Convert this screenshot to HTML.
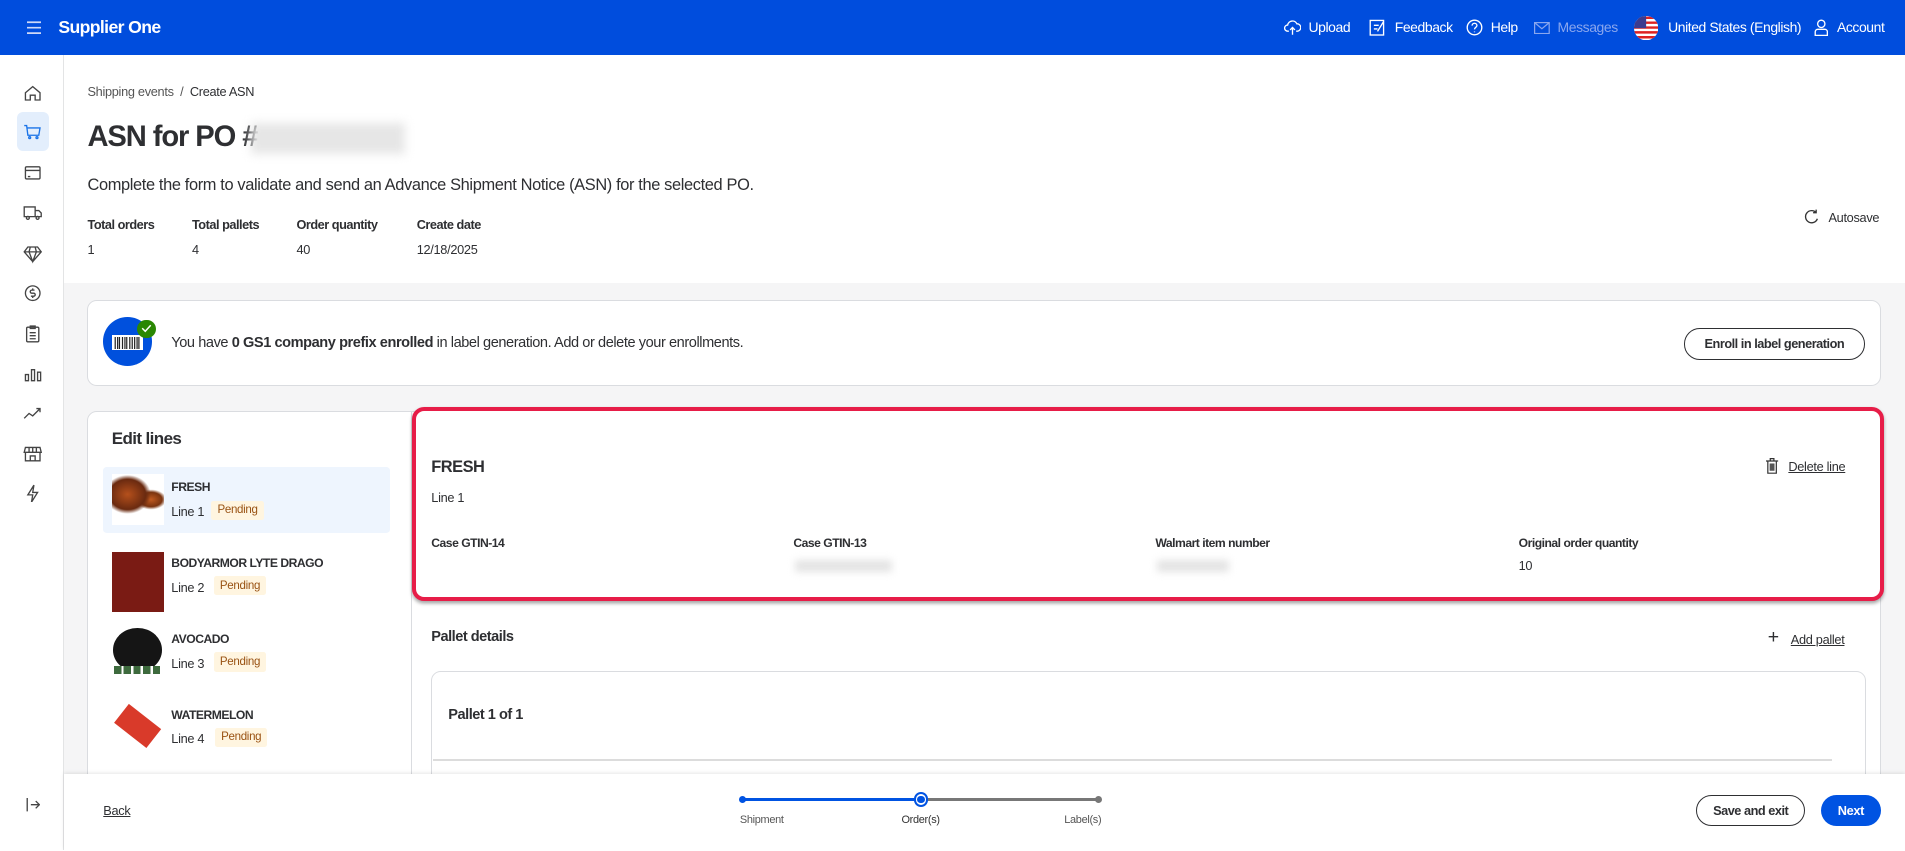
<!DOCTYPE html>
<html><head><meta charset="utf-8">
<style>
*{margin:0;padding:0;box-sizing:border-box}
html,body{width:1905px;height:851px;overflow:hidden;background:#fff}
#w{width:1568px;height:700px;position:relative;zoom:1.21492;font-family:"Liberation Sans",sans-serif;color:#2e2f32;overflow:hidden;letter-spacing:-.25px}
.a{position:absolute;white-space:nowrap}
.hdr{left:0;top:0;width:1568px;height:45px;background:#004ddd}
.nav{color:#fff;font-size:11.5px;top:16px;letter-spacing:-.35px}
.ico{position:absolute}
.side{left:0;top:45px;width:53px;height:655px;border-right:1px solid #e3e4e5;background:#fff}
.gray{left:53px;top:233px;width:1515px;height:467px;background:#f5f5f6}
.card{background:#fff;border:1px solid #dadce0;border-radius:8px}
.b{font-weight:bold}
.pend{background:#fff5e0;color:#995213;font-size:9.5px;padding:3px 5px;border-radius:2px}
.thumb{position:absolute;left:92px;width:43px;height:50px}
.blur{background:#e4e4e4;filter:blur(3px);height:10px}
</style></head><body><div id="w">
<div class="a hdr"></div>
<svg class="ico" style="left:22px;top:17px" width="12" height="11"><path d="M0 1h12M0 5.5h12M0 10h12" stroke="#cfd9f7" stroke-width="1.4"/></svg>
<div class="a b" style="left:48px;top:14px;color:#fff;font-size:14.5px;letter-spacing:-.5px">Supplier One</div>
<svg class="ico" style="left:1057px;top:16px" width="14" height="14" fill="none" stroke="#fff" stroke-width="1.1"><path d="M4 10H3a2.5 2.5 0 010-5 4 4 0 017.6-1A2.5 2.5 0 0111 10h-1M7 13V7M5 9l2-2 2 2"/></svg>
<div class="a nav" style="left:1077px">Upload</div>
<svg class="ico" style="left:1127px;top:15px" width="14" height="15" fill="none" stroke="#fff" stroke-width="1.1"><rect x="1" y="2" width="11" height="12"/><path d="M4 6h4M4 9h3M7 11l5-8"/></svg>
<div class="a nav" style="left:1148px">Feedback</div>
<svg class="ico" style="left:1207px;top:16px" width="14" height="14" fill="none" stroke="#fff" stroke-width="1.1"><circle cx="7" cy="7" r="6"/><path d="M5 5.5a2 2 0 114 0c0 1.3-2 1.4-2 3M7 10.3v.6"/></svg>
<div class="a nav" style="left:1227px">Help</div>
<svg class="ico" style="left:1263px;top:18px" width="13" height="10" fill="none" stroke="#8aa7ee" stroke-width="1"><rect x=".5" y=".5" width="12" height="9"/><path d="M.5 .5l6 5 6-5"/></svg>
<div class="a nav" style="left:1282px;color:#8aa7ee">Messages</div>
<svg class="ico" style="left:1345px;top:13px" width="20" height="20"><defs><clipPath id="c"><circle cx="10" cy="10" r="10"/></clipPath></defs><g clip-path="url(#c)"><rect width="20" height="20" fill="#fff"/><path d="M0 1.5h20M0 5.5h20M0 9.5h20M0 13.5h20M0 17.5h20" stroke="#d22" stroke-width="2"/><rect width="10" height="10" fill="#3c3b8e"/></g></svg>
<div class="a nav" style="left:1373px">United States (English)</div>
<svg class="ico" style="left:1493px;top:16px" width="12" height="14" fill="none" stroke="#fff" stroke-width="1.1"><circle cx="6" cy="4" r="3"/><path d="M1 13.5v-3a2 2 0 012-2h6a2 2 0 012 2v3z"/></svg>
<div class="a nav" style="left:1512px">Account</div>

<div class="a side"></div>
<div class="a" style="left:14px;top:92px;width:26px;height:32px;background:#e3eefc;border-radius:5px"></div>
<svg class="ico" style="left:19px;top:68px" width="16" height="345" fill="none" stroke="#444" stroke-width="1.1">
<path d="M2 8l6-5 6 5v6H10v-4H6v4H2z"/>
<g transform="translate(0,33)" stroke="#1a73e8"><path d="M1 2h2l1 8h9l1-6H3.5"/><circle cx="5.5" cy="12" r=".8"/><circle cx="11.5" cy="12" r=".8"/></g>
<g transform="translate(0,66)"><rect x="2" y="3" width="12" height="10" rx="1"/><path d="M2 6h12M4 11h2"/></g>
<g transform="translate(0,99)"><path d="M1 3h9v8H1zM10 6h3l2 2v3h-5"/><circle cx="4" cy="12" r="1.2"/><circle cx="12" cy="12" r="1.2"/></g>
<g transform="translate(0,132)"><path d="M4 3h8l3 4-7 8-7-8zM1 7h14M6 3l-1 4 3 8 3-8-1-4"/></g>
<g transform="translate(0,165)"><circle cx="8" cy="8" r="6"/><path d="M9.5 5.5H7.2a1.2 1.2 0 000 2.5h1.6a1.2 1.2 0 010 2.5H6.5M8 4v1.5M8 10.5V12"/></g>
<g transform="translate(0,198)"><rect x="3" y="3" width="10" height="12" rx="1"/><path d="M6 2h4v2H6zM5.5 7.5h5M5.5 10h5M5.5 12.5h5"/></g>
<g transform="translate(0,231)"><path d="M2 9h2.5v5H2zM7 5h2.5v9H7zM12 7h2.5v7H12z"/></g>
<g transform="translate(0,264)"><path d="M1 12l4-4 3 2 6-6M11 4h3v3"/></g>
<g transform="translate(0,297)"><path d="M2 3h12l1 4H1zM2 7v7h12V7M6 14v-4h4v4M5 3v4M8 3v4M11 3v4"/></g>
<g transform="translate(0,330)"><path d="M9 1L4 9h4l-1 6 5-8H8z"/></g>
</svg>
<svg class="ico" style="left:21px;top:657px" width="12" height="11" fill="none" stroke="#444" stroke-width="1.1"><path d="M1 0v11M4 5.5h7M8 2.5l3 3-3 3"/></svg>

<div class="a" style="left:72px;top:69px;font-size:10.5px;color:#555">Shipping events &nbsp;/&nbsp; <span style="color:#2e2f32">Create ASN</span></div>
<div class="a b" style="left:72px;top:100px;font-size:24px;letter-spacing:-.9px">ASN for PO #</div>
<div class="a" style="left:207px;top:101px;width:126px;height:26px;background:#e6e6e6;filter:blur(4px)"></div>
<div class="a" style="left:72px;top:145px;font-size:13.5px;letter-spacing:-.3px">Complete the form to validate and send an Advance Shipment Notice (ASN) for the selected PO.</div>
<div class="a b" style="left:72px;top:179px;font-size:10.5px;letter-spacing:-.4px">Total orders</div>
<div class="a b" style="left:158px;top:179px;font-size:10.5px;letter-spacing:-.4px">Total pallets</div>
<div class="a b" style="left:244px;top:179px;font-size:10.5px;letter-spacing:-.4px">Order quantity</div>
<div class="a b" style="left:343px;top:179px;font-size:10.5px;letter-spacing:-.4px">Create date</div>
<div class="a" style="left:72px;top:199px;font-size:10.5px">1</div>
<div class="a" style="left:158px;top:199px;font-size:10.5px">4</div>
<div class="a" style="left:244px;top:199px;font-size:10.5px">40</div>
<div class="a" style="left:343px;top:199px;font-size:10.5px">12/18/2025</div>
<svg class="ico" style="left:1485px;top:172px" width="12" height="13" fill="none" stroke="#333" stroke-width="1.1"><path d="M10 3A5 5 0 1011 8M10 0.5V3H7.5"/></svg>
<div class="a" style="left:1505px;top:173px;font-size:10.5px">Autosave</div>

<div class="a gray"></div>
<div class="a card" style="left:72px;top:247px;width:1476px;height:71px"></div>
<div class="a" style="left:85px;top:261px;width:40px;height:40px;border-radius:50%;background:#0050dd"></div>
<div class="a" style="left:92px;top:276px;width:26px;height:12px;background:#fff"></div>
<svg class="ico" style="left:94px;top:277px" width="22" height="10"><path d="M1 0v10M3 0v10M4.5 0v10M7 0v10M9 0v10M10.5 0v10M13 0v10M15 0v10M17 0v10M19 0v10M20.5 0v10" stroke="#222" stroke-width="1"/></svg>
<div class="a" style="left:113px;top:263px;width:15px;height:15px;border-radius:50%;background:#2a8703"></div>
<svg class="ico" style="left:116px;top:267px" width="9" height="7" fill="none" stroke="#fff" stroke-width="1.2"><path d="M1 3.5l2.5 2.5L8 1"/></svg>
<div class="a" style="left:141px;top:276px;font-size:12px;letter-spacing:-.35px">You have <b>0 GS1 company prefix enrolled</b> in label generation. Add or delete your enrollments.</div>
<div class="a b" style="left:1386px;top:270px;width:149px;height:26px;border:1px solid #2e2f32;border-radius:13px;font-size:10.5px;text-align:center;line-height:24px;letter-spacing:-.4px">Enroll in label generation</div>

<div class="a card" style="left:72px;top:338px;width:267px;height:340px;border-radius:8px 0 0 0"></div>
<div class="a card" style="left:338px;top:338px;width:1210px;height:340px;border-radius:0 8px 0 0"></div>
<div class="a b" style="left:92px;top:353px;font-size:14px;letter-spacing:-.5px">Edit lines</div>
<div class="a" style="left:85px;top:384px;width:236px;height:55px;background:#eef5fe;border-radius:3px"></div>
<div class="thumb" style="top:390px;background:radial-gradient(ellipse at 30% 40%,#b5501c 0,#6a2a10 35%,transparent 45%),radial-gradient(ellipse at 75% 50%,#c05a20 0,#7a3410 20%,transparent 28%),#fff;height:42px"></div>
<div class="thumb" style="top:454px;background:#7a1b14"></div>
<div class="a" style="left:93px;top:517px;width:40px;height:36px;border-radius:50%;background:#151515"></div>
<div class="a" style="left:94px;top:548px;width:39px;height:7px;background:repeating-linear-gradient(90deg,#3d6a3d 0 6px,#fff 6px 8px)"></div>
<div class="a" style="left:96px;top:588px;width:34px;height:20px;background:#d93a2a;transform:rotate(38deg)"></div>
<div class="a b" style="left:141px;top:395px;font-size:10px;letter-spacing:-.4px">FRESH</div>
<div class="a" style="left:141px;top:415px;font-size:10.5px">Line 1</div><div class="a pend" style="left:174px;top:412px">Pending</div>
<div class="a b" style="left:141px;top:458px;font-size:10px;letter-spacing:-.4px">BODYARMOR LYTE DRAGO</div>
<div class="a" style="left:141px;top:477px;font-size:10.5px">Line 2</div><div class="a pend" style="left:176px;top:474px">Pending</div>
<div class="a b" style="left:141px;top:520px;font-size:10px;letter-spacing:-.4px">AVOCADO</div>
<div class="a" style="left:141px;top:540px;font-size:10.5px">Line 3</div><div class="a pend" style="left:176px;top:537px">Pending</div>
<div class="a b" style="left:141px;top:583px;font-size:10px;letter-spacing:-.4px">WATERMELON</div>
<div class="a" style="left:141px;top:602px;font-size:10.5px">Line 4</div><div class="a pend" style="left:177px;top:599px">Pending</div>

<div class="a" style="left:339px;top:335px;width:1212px;height:160px;border:4px solid #e71d48;border-radius:10px;background:#fff;box-shadow:0 2px 3px rgba(0,0,0,.35)"></div>
<div class="a b" style="left:355px;top:377px;font-size:13.5px;letter-spacing:-.4px">FRESH</div>
<div class="a" style="left:355px;top:403px;font-size:10.5px">Line 1</div>
<svg class="ico" style="left:1454px;top:377px" width="10" height="13" fill="none" stroke="#333" stroke-width="1"><path d="M0 2.5h10M3.5 2.5V.5h3v2M1.5 2.5v10h7v-10"/><rect x="3" y="4.5" width="4" height="6" fill="#555" stroke="none"/></svg>
<div class="a" style="left:1472px;top:378px;font-size:10.5px;text-decoration:underline">Delete line</div>
<div class="a b" style="left:355px;top:441px;font-size:10px;letter-spacing:-.4px">Case GTIN-14</div>
<div class="a b" style="left:653px;top:441px;font-size:10px;letter-spacing:-.4px">Case GTIN-13</div>
<div class="a b" style="left:951px;top:441px;font-size:10px;letter-spacing:-.4px">Walmart item number</div>
<div class="a b" style="left:1250px;top:441px;font-size:10px;letter-spacing:-.4px">Original order quantity</div>
<div class="a blur" style="left:654px;top:461px;width:80px"></div>
<div class="a blur" style="left:952px;top:461px;width:60px"></div>
<div class="a" style="left:1250px;top:459px;font-size:10.5px">10</div>

<div class="a b" style="left:355px;top:518px;font-size:12px;letter-spacing:-.4px">Pallet details</div>
<div class="a" style="left:1455px;top:515px;font-size:16px;font-weight:300">+</div>
<div class="a" style="left:1474px;top:520px;font-size:10.5px;text-decoration:underline">Add pallet</div>
<div class="a card" style="left:355px;top:552px;width:1181px;height:130px"></div>
<div class="a b" style="left:369px;top:582px;font-size:12px;letter-spacing:-.4px">Pallet 1 of 1</div>
<div class="a" style="left:356px;top:625px;width:1152px;height:1px;background:#dcdcdc"></div>

<div class="a" style="left:53px;top:637px;width:1515px;height:63px;background:#fff;box-shadow:0 -1px 3px rgba(0,0,0,.1)"></div>
<div class="a" style="left:85px;top:661px;font-size:10.5px;text-decoration:underline">Back</div>
<div class="a" style="left:611px;top:657px;width:147px;height:2px;background:#0053e2"></div>
<div class="a" style="left:758px;top:657px;width:146px;height:2px;background:#777"></div>
<div class="a" style="left:608px;top:655px;width:6px;height:6px;border-radius:50%;background:#0053e2"></div>
<div class="a" style="left:752px;top:652px;width:12px;height:12px;border-radius:50%;border:2px solid #0053e2;background:#fff"></div>
<div class="a" style="left:755px;top:655px;width:6px;height:6px;border-radius:50%;background:#0053e2"></div>
<div class="a" style="left:901px;top:655px;width:6px;height:6px;border-radius:50%;background:#777"></div>
<div class="a" style="left:609px;top:670px;font-size:9px;color:#555">Shipment</div>
<div class="a" style="left:742px;top:670px;font-size:9px;color:#333">Order(s)</div>
<div class="a" style="left:876px;top:670px;font-size:9px;color:#555">Label(s)</div>
<div class="a b" style="left:1396px;top:654px;width:90px;height:26px;border:1px solid #2e2f32;border-radius:13px;font-size:10.5px;text-align:center;line-height:24px;letter-spacing:-.4px">Save and exit</div>
<div class="a b" style="left:1499px;top:654px;width:49px;height:26px;background:#0053e2;color:#fff;border-radius:13px;font-size:10.5px;text-align:center;line-height:26px">Next</div>
</div></body></html>
